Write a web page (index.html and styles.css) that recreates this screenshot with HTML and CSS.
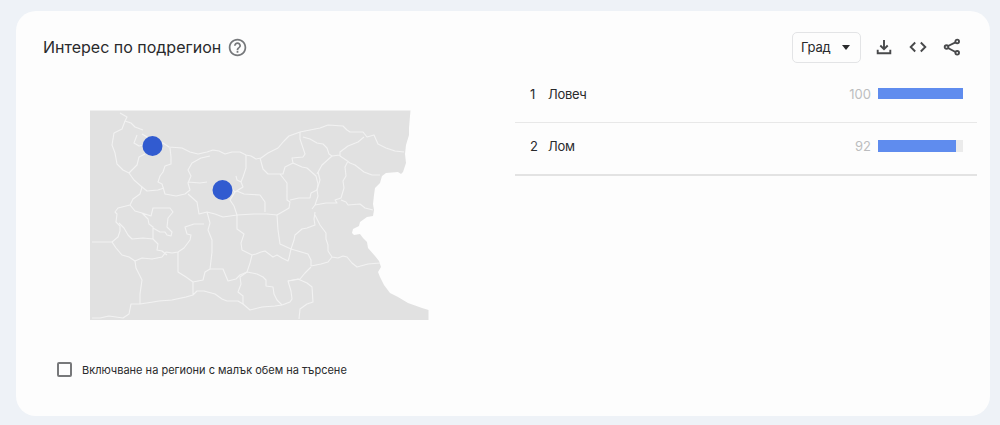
FILE: index.html
```html
<!DOCTYPE html>
<html lang="bg">
<head>
<meta charset="utf-8">
<title>Интерес по подрегион</title>
<link rel="stylesheet" href="styles.css">
</head>
<body>
<main class="card">
  <header class="header">
    <h1 class="title">Интерес по подрегион</h1>
    <svg class="help" viewBox="0 0 24 24"><path d="M11 18h2v-2h-2v2zm1-16C6.480 2 2 6.480 2 12s4.480 10 10 10 10-4.480 10-10S17.520 2 12 2zm0 18c-4.410 0-8-3.590-8-8s3.590-8 8-8 8 3.590 8 8-3.590 8-8 8zm0-14c-2.210 0-4 1.790-4 4h2c0-1.100.9-2 2-2s2 .9 2 2c0 2-3 1.750-3 5h2c0-2.250 3-2.500 3-5 0-2.210-1.790-4-4-4z"/></svg>
    <div class="actions">
      <div class="select"><span class="select-label">Град</span><svg class="caret" viewBox="0 0 8 5"><path d="M0 0h8L4 5z"/></svg></div>
      <svg class="action" viewBox="0 0 18 18"><path d="M9 2v9M5.300 7.500 9 11.200l3.700-3.700M2.700 11.800v3.500h12.600v-3.500"/></svg>
      <svg class="action" viewBox="0 0 18 18"><path d="M6.200 4.500 1.700 9l4.500 4.500M11.800 4.500 16.300 9l-4.500 4.500"/></svg>
      <svg class="action share" viewBox="0 0 18 18"><path d="M12.500 4.300 5 8M5 10l7.500 4"/><circle cx="3.500" cy="9" r="1.800"/><circle cx="14.200" cy="3.400" r="1.800"/><circle cx="14.200" cy="14.800" r="1.800"/></svg>
    </div>
  </header>
  <div class="content">
    <section class="map-column">
      <svg class="map" viewBox="90 110 339 210">
        <path class="land" d="M90 110.500H410.500L410 116 409 128 409 135 406 145 405 154 406 163 403 172 401 174 398 172 386 173 382 176 380 183 375 188 374 195 373 204 374 210 373 216 367 217 360 222 359 226 353 229 352 233 354 235 360 234 363 238 367 242 368 248 375 256 379 261 381 267 378 272 380 277 384 285 390 293 398 297 408 303 422 308 428.500 310V320H90z"/>
        <g class="borders">
          <!-- Northern border -->
          <path d="M120 113 127 117 125 121 131 123 135 127 143 130M142 134 152 140 163 143 169 147 182 148 190 152 198 154 207 152 213 150 219 151 225 154 232 152 240 152 246 155 251 156 256 159 261 158 268 153 278 148 284 141 289 136 300 132 310 130 320 128 328 125 343 126 347 130 350 132 363 132 367 137 374 135 378 144 386 148 395 151 404 152"/>
          <!-- North-west -->
          <path d="M125 121 122 129 114 133 112 145 115 153 117 164 123 170 129 173 134 180 142 187 140 194 133 199 130 205 118 208 115 212 117 214 116 222 120 226 120 231 118 237 112 242 92 242"/>
          <path d="M129 173 137 165 139 157 145 154M137 135 134 143 139 146 144 145M142 187 147 191 158 190 164 188M170 148 171 157 171 164 165 166 163 172 160 176 158 182 162 184 165 194 176 196 185 194 190 190 188 183 191 176 188 170 192 163 201 158 210 156M188 182 200 183 207 182M188 194 197 202 199 214 207 212 215 214 223 217 237 215"/>
          <!-- South-west -->
          <path d="M130 205 135 211 142 213 148 219 149 224 153 227 153 239M119 223 124 228 128 235 132 239 143 238 153 239 158 244 157 250 162 251 167 255M142 213 151 216 153 208 170 208 173 212 168 218 167 227 172 232 171 236 167 235 165 232 160 232 153 228M112 242 116 248 122 255 129 257 135 261 142 258 152 259 162 257 166 252 172 253 178 252 184 248 190 240 191 235 187 234 185 227 194 224 204 224"/>
          <path d="M135 261 136 268 142 280 140 294 140 304 153 302 159 301 172 300 186 297 193 295 197 291 204 291 215 294 222 299 227 301 238 301 243 304 250 310 262 307 275 306 282 305 290 302 292 299 291 291 288 281 300 279 305 273 311 267M140 304 131 304 129 314 123 318 109 316 100 318 92 318M178 252 178 272 186 277 193 282 193 295M193 282 203 280 205 272 210 269 212 252 212 240 208 230 210 223 207 212"/>
          <!-- Central and northern provinces -->
          <path d="M246 155 246 168 243 177 241 182 237 180 236 176M241 182 243 187 235 192 230 187M235 192 230 200 234 206 237 215 237 229 244 234 241 243 242 250 252 255 250 263 247 272 240 275 236 279 228 281 223 269 210 269M237 191 244 194 260 195 265 202 265 212M237 215 254 214 267 214 277 215 278 230 280 244 291 249 294 240 295 235 302 229 307 228 315 225 314 219 315 212"/>
          <path d="M260 158 263 169 268 174 275 174 280 174 287 183 287 200 290 202 289 208 284 211 277 215M300 132 300 139 303 148 305 154 303 157 292 158 293 163 285 167 283 174 280 174M293 163 302 167 307 168 316 176 318 184 317 190 311 193 310 198 299 198 290 200M303 137 310 139 317 143 323 144 327 148 329 154 332 156 322 165 317 174"/>
          <!-- Eastern provinces -->
          <path d="M364 137 358 142 348 146 340 152 340 156 346 160 350 163 355 165 364 172 372 175 380 175M348 161 345 167 346 176 343 181 344 188 341 198 335 200 337 203 326 203 315 205M341 200 346 202 348 205 360 204 365 208 373 210M332 156 340 155M318 172 320 180 317 190 318 196 315 205 312 209"/>
          <!-- Southern provinces -->
          <path d="M315 215 320 225 326 233 326 239 328 245 328 251 332 257 328 262 321 264 311 266 311 260 308 254 291 249 289 258 288 261 282 258 277 255 273 257 265 251 261 252 256 254 252 255M332 257 338 258 343 256 347 257 352 263 357 267 368 264 380 263M247 272 257 274 263 277 266 280 266 286 273 287 274 294 277 300 282 305M247 272 240 277 241 284 238 292 243 296 243 304M288 281 298 279 307 283 312 287 313 302 307 304 300 309 299 319"/>
        </g>
        <g class="points"><circle cx="152.500" cy="146" r="10"/><circle cx="222.500" cy="190" r="10"/></g>
      </svg>
      <label class="option"><span class="checkbox"></span><span class="option-label">Включване на региони с малък обем на търсене</span></label>
    </section>
    <section class="ranking">
      <div class="row"><span class="rank">1</span><span class="name">Ловеч</span><span class="value">100</span><div class="track"><div class="fill" style="width:100%"></div></div></div>
      <div class="row row-last"><span class="rank">2</span><span class="name">Лом</span><span class="value">92</span><div class="track track-last"><div class="fill" style="width:92%"></div></div></div>
    </section>
  </div>
</main>
</body>
</html>
```

FILE: styles.css
```css
* { box-sizing: border-box; }
body {
  margin: 0;
  height: 425px;
  padding: 11px 10px 9px 16px;
  background: #eef2f7;
  color: #292a2c;
  font-family: Inter, sans-serif;
  overflow: hidden;
}
.card { height: 405px; background: #fdfdfd; border-radius: 20px; }
.header { display: flex; align-items: center; height: 61px; padding: 12px 29px 1px 27px; }
.title { margin: 0; width: 178px; font-weight: 400; font-size: 16px; line-height: 24px; letter-spacing: 0; white-space: nowrap; }
.help { width: 21px; height: 21px; margin-left: 6px; fill: #76787b; }
.actions { display: flex; align-items: center; margin-left: auto; gap: 16px; }
.select {
  display: flex; align-items: center; justify-content: space-between;
  width: 69px; height: 31px; margin-right: -2px; padding: 0 10px 0 8px;
  border: 1px solid #e3e4e6; border-radius: 5px;
  font-size: 13px; line-height: 20px;
}
.select-label { letter-spacing: -.2px; }
.caret { width: 8px; height: 5px; fill: #292a2c; }
.action { width: 18px; height: 18px; fill: none; stroke: #48494b; stroke-width: 1.9; }
.content { display: flex; }
.map-column { width: 499px; padding: 38px 0 0 41px; }
.map { display: block; width: 339px; height: 210px; margin-left: 33px; }
.land { fill: #e1e1e1; }
.borders { fill: none; stroke: #f2f2f2; stroke-width: 1.1; stroke-linejoin: round; }
.points { fill: #315bd0; }
.option { display: flex; align-items: center; height: 20px; margin-top: 39px; gap: 10px; }
.checkbox { width: 15px; height: 15px; border: 2px solid #77787a; border-radius: 2px; }
.option-label { font-size: 11px; line-height: 18px; white-space: nowrap; padding-top: 1px; }
.ranking { width: 462px; }
.row {
  display: flex; align-items: center; height: 51px; padding: 0 14px 7px 15px;
  border-bottom: 1px solid #e8e8e8; font-size: 13px; line-height: 18px;
}
.row-last { height: 53px; padding-bottom: 5px; border-bottom: 2px solid #e3e3e3; }
.rank { width: 18px; }
.name { letter-spacing: -.3px; }
.value { margin-left: auto; margin-right: 7px; color: #bcbdbf; }
.track { width: 85px; height: 11px; background: #ebebeb; }
.track-last { height: 12px; }
.fill { height: 100%; background: #5f8cee; }
```
